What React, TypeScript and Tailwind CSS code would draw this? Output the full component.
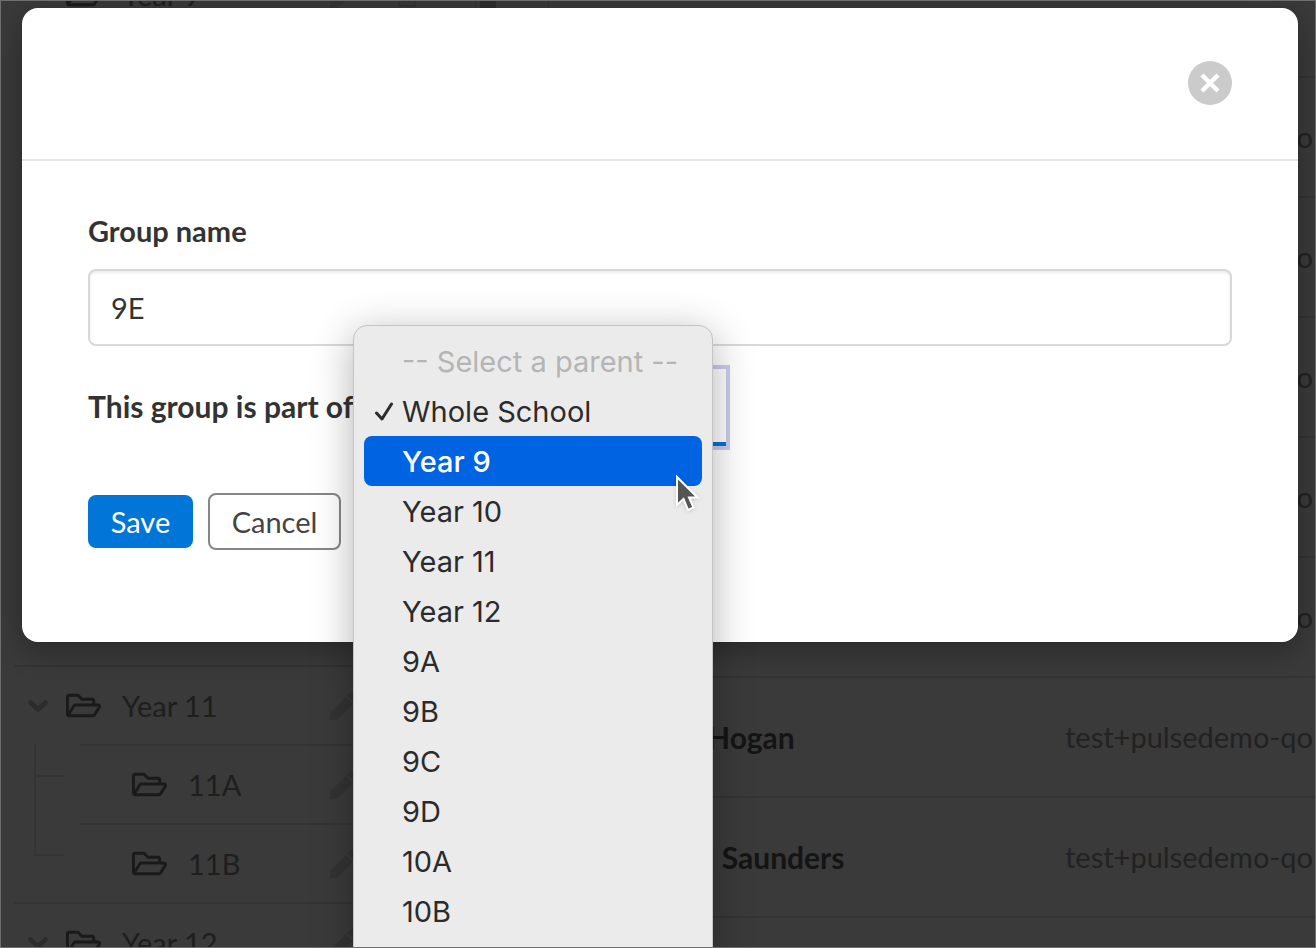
import React from 'react';
import { FaPen, FaRegFolderOpen, FaRegTrashAlt } from 'react-icons/fa';

interface TreeRowProps {
  label: string;
  child?: boolean;
}

interface Member {
  name: string;
  email: string;
}

const members: Member[] = [
  { name: '', email: 'test+pulsedemo-qo' },
  { name: '', email: 'test+pulsedemo-qo' },
  { name: '', email: 'test+pulsedemo-qo' },
  { name: '', email: 'test+pulsedemo-qo' },
  { name: '', email: 'test+pulsedemo-qo' },
  { name: 'Hogan', email: 'test+pulsedemo-qo' },
  { name: 'l Saunders', email: 'test+pulsedemo-qo' },
  { name: '', email: '' },
];

const parentOptions = ['Whole School', 'Year 9', 'Year 10', 'Year 11', 'Year 12', '9A', '9B', '9C', '9D', '10A', '10B'];

// One row of the group tree; child rows are indented past the guide lines
const TreeRow: React.FC<TreeRowProps> = ({ label, child }) => (
  <div
    className={
      child
        ? 'ml-[66px] h-[79px] flex items-center border-t-2 border-[#343434] pl-[52px]'
        : 'h-[79px] flex items-center border-t-2 border-[#343434] pl-[14px]'
    }
  >
    {!child && (
      <svg className="w-5 h-5 mr-[18px]" viewBox="0 0 20 20" fill="none" stroke="#2c2c2c" strokeWidth="4.500" strokeLinecap="round">
        <path d="M2.500 6.500L10 13.500L17.500 6.500" />
      </svg>
    )}
    <FaRegFolderOpen className="w-[35px] h-[35px] text-[#1a1a1a]" />
    <span className="ml-[21px] flex-1 whitespace-nowrap">{label}</span>
    <FaPen className="w-7 h-7 mr-[37px] text-[#333333]" />
    <FaRegTrashAlt className="w-6 h-6 mr-[56px] text-[#333333]" />
  </div>
);

const GroupTree: React.FC = () => (
  <div className="-mt-[46px] w-[462px] shrink-0 border-r border-[#333333]">
    <TreeRow label="Year 9" />
    <div className="h-[632px]" />
    <TreeRow label="Year 11" />
    <div className="relative">
      {/* guide lines */}
      <div className="absolute left-[20px] top-0 w-[30px] h-[112px] border-l-2 border-b-2 border-[#343434]" />
      <div className="absolute left-[20px] top-[31px] w-[30px] border-t-2 border-[#343434]" />
      <TreeRow label="11A" child />
      <TreeRow label="11B" child />
    </div>
    <TreeRow label="Year 12" />
  </div>
);

const MembersTable: React.FC = () => (
  <div className="flex-1 min-w-0 overflow-hidden border-l border-[#343434] pt-[76px]">
    <table className="w-full table-fixed">
      <tbody>
        {members.map((m, i) => (
          <tr key={i} className="h-[120px] border-t-2 border-[#343434]">
            <td className="w-[516px] pl-[158px] text-[30px] font-bold text-[#141414] whitespace-nowrap">{m.name}</td>
            <td className="text-[#222222] whitespace-nowrap">{m.email}</td>
          </tr>
        ))}
      </tbody>
    </table>
  </div>
);

const ParentMenu: React.FC = () => (
  <div
    role="listbox"
    aria-label="Select a parent"
    className="absolute -left-[12px] -top-[44px] z-10 w-[360px] rounded-[14px] border border-[#c4c4c4] bg-[#ebebeb] px-[10px] pt-[10px] pb-8 font-['Inter',sans-serif] text-[29px] text-[#2b2b2b] shadow-[0_8px_40px_rgba(0,0,0,0.3)]"
  >
    <div className="h-[50px] flex items-center pt-0.5 pl-[38px] text-[#b5b5b5] whitespace-nowrap">-- Select a parent --</div>
    {parentOptions.map((option) => (
      <button
        key={option}
        type="button"
        role="option"
        aria-selected={option === 'Whole School'}
        className={
          option === 'Year 9'
            ? 'h-[50px] w-full flex items-center pt-0.5 rounded-lg bg-[#0063e1] font-medium text-white'
            : 'h-[50px] w-full flex items-center pt-0.5'
        }
      >
        <span className="w-[38px] pl-[10px]">
          {option === 'Whole School' && (
            <svg className="w-5 h-5" viewBox="0 0 20 20" fill="none" stroke="currentColor" strokeWidth="3" strokeLinecap="round" strokeLinejoin="round">
              <path d="M2.500 11L8 17L17.500 2" />
            </svg>
          )}
        </span>
        {option}
      </button>
    ))}
    {/* mouse pointer */}
    <svg className="absolute left-[320px] top-[148px] w-7 h-10 drop-shadow" viewBox="0 0 28 40">
      <path d="M3 3V31L9.500 25L14 36L19.500 33.500L15 23.500H23.500Z" fill="#555555" stroke="#ffffff" strokeWidth="2" />
    </svg>
  </div>
);

const GroupDialog: React.FC = () => (
  <div role="dialog" aria-label="Edit group" className="rounded-2xl bg-white text-[#333333] shadow-[0_8px_30px_rgba(0,0,0,0.3)]">
    <div className="flex justify-end border-b-2 border-[#e5e5e5] px-[66px] pt-[53px] pb-[54px]">
      <button type="button" aria-label="Close" className="flex h-11 w-11 items-center justify-center rounded-full bg-[#cbcbcb]">
        <svg className="w-5 h-5" viewBox="0 0 20 20" stroke="#ffffff" strokeWidth="4.500">
          <path d="M2 2L18 18M18 2L2 18" />
        </svg>
      </button>
    </div>
    <form className="px-[66px] pt-[50px] pb-[92px]" onSubmit={(e) => e.preventDefault()}>
      <label htmlFor="group-name" className="block h-10 leading-10 font-bold">
        Group name
      </label>
      <input
        id="group-name"
        type="text"
        defaultValue="9E"
        className="mt-[18px] block h-[77px] w-full rounded-lg border-2 border-[#d9d9d9] px-[21px] shadow-[inset_0_2px_3px_rgba(0,0,0,0.08)] outline-none"
      />
      <div className="mt-[23px] flex items-center">
        <label htmlFor="group-parent" className="w-[277px] pb-0.5 whitespace-nowrap text-[30px] font-bold">
          This group is part of
        </label>
        <div className="relative">
          <select
            id="group-parent"
            className="block h-[77px] w-[361px] appearance-none border-b-4 border-[#0275d8] bg-white px-5 outline-4 outline-[#c9cdea]"
          >
            <option>Whole School</option>
          </select>
          <ParentMenu />
        </div>
      </div>
      <div className="mt-[47px] flex items-center gap-[15px]">
        <button type="submit" className="h-[53px] w-[105px] rounded-lg bg-[#0275d8] text-white">
          Save
        </button>
        <button type="button" className="h-[57px] w-[133px] rounded-lg border-2 border-[#868686] text-[#444444]">
          Cancel
        </button>
      </div>
    </form>
  </div>
);

const App: React.FC = () => (
  <div className="relative h-screen overflow-hidden bg-[#3a3a3a] font-['Lato',sans-serif] text-[29px] text-[#1e1e1e]">
    <div className="flex h-full pl-[14px]">
      <GroupTree />
      <div className="ml-1 h-full w-4 shrink-0 bg-[#2e2e2e]" />
      <div className="w-[52px] shrink-0" />
      <MembersTable />
    </div>
    <div className="absolute inset-0 overflow-hidden pt-2 pl-[22px] pr-[18px]">
      <GroupDialog />
    </div>
    <div className="pointer-events-none absolute inset-0 z-20 border border-[#6f6f6f]" />
  </div>
);

export default App;
